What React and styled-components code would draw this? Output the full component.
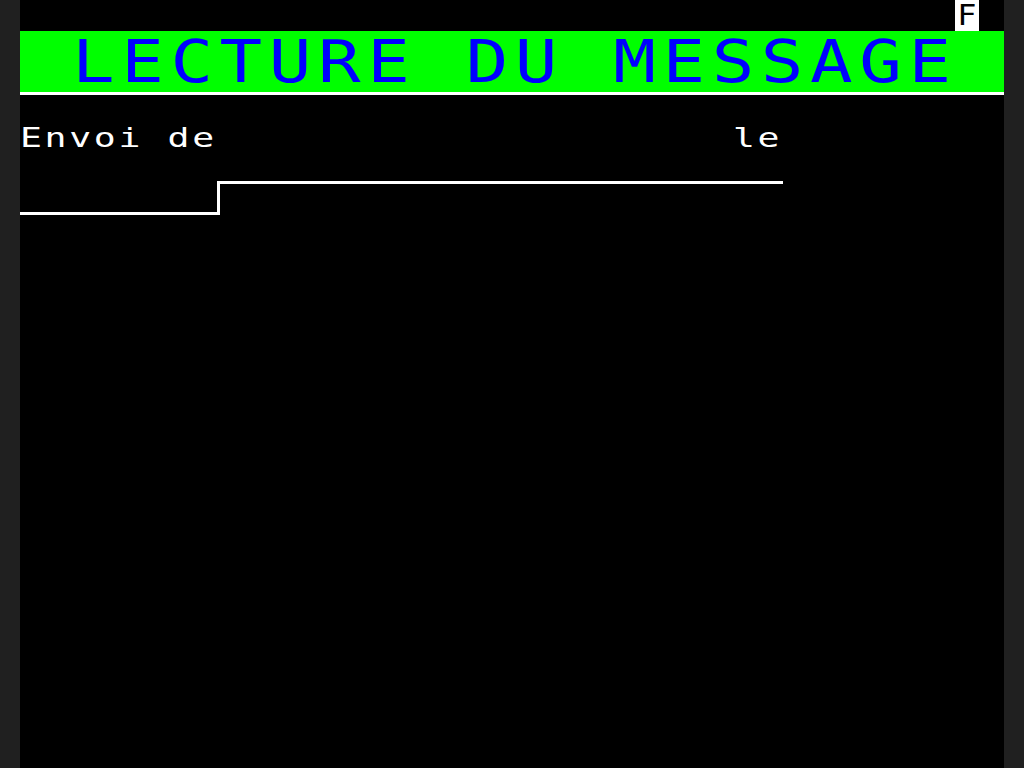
import React from "react";
import styled, { createGlobalStyle } from "styled-components";

const COL = 24.6;
const ROW = 30.72;

const Global = createGlobalStyle`
  html, body { margin: 0; padding: 0; background: #202020; }
  body { width: 1024px; height: 768px; overflow: hidden; }
`;

const Screen = styled.div`
  width: 984px;
  height: 768px;
  margin: 0 auto;
  background: #000;
  display: flex;
  flex-direction: column;
  font-family: "DejaVu Sans Mono", "Liberation Mono", monospace;
`;

const StatusRow = styled.div`
  height: 31px;
  display: flex;
  justify-content: flex-end;
  padding-right: ${COL}px;
`;

const Badge = styled.div`
  width: ${COL}px;
  height: 31px;
  background: #fff;
  color: #000;
  font-size: 29px;
  line-height: 31px;
  display: flex;
  justify-content: center;
`;

const BadgeText = styled.span`
  display: inline-block;
  transform: scaleX(1.1);
`;

const Banner = styled.div`
  height: ${ROW * 2}px;
  background: #00ff00;
  border-bottom: 3px solid #fff;
  display: flex;
  align-items: center;
  padding-left: ${COL * 2}px;
`;

const Title = styled.span`
  color: #0000ff;
  font-size: 59px;
  font-weight: 400;
  line-height: ${ROW * 2}px;
  letter-spacing: ${49.2 / 1.2 - 0.602 * 59}px;
  white-space: pre;
  display: inline-block;
  transform: scaleX(1.2);
  transform-origin: left center;
  margin-left: 3px;
`;

const FieldRow = styled.div`
  margin-top: 27.5px;
  height: ${ROW}px;
  display: grid;
  grid-template-columns: repeat(40, ${COL}px);
`;

const Label = styled.span`
  grid-column: ${(p) => p.$col + 1} / span ${(p) => p.$span};
  color: #fff;
  font-size: 27px;
  line-height: ${ROW}px;
  letter-spacing: ${COL / 1.35 - 0.602 * 27}px;
  white-space: pre;
  display: inline-block;
  transform: scaleX(1.35);
  transform-origin: left center;
`;

const Step = styled.div`
  margin-top: 27.4px;
  display: flex;
  align-items: flex-start;
`;

const StepLow = styled.div`
  width: 197px;
  height: 31px;
  border-bottom: 3px solid #fff;
  border-right: 3px solid #fff;
`;

const StepHigh = styled.div`
  width: 563px;
  border-top: 3px solid #fff;
`;

export default function App() {
  return (
    <>
      <Global />
      <Screen>
        <StatusRow>
          <Badge>
            <BadgeText>F</BadgeText>
          </Badge>
        </StatusRow>
        <Banner>
          <Title>LECTURE DU MESSAGE</Title>
        </Banner>
        <FieldRow>
          <Label $col={0} $span={8}>Envoi de</Label>
          <Label $col={29} $span={2}>le</Label>
        </FieldRow>
        <Step>
          <StepLow />
          <StepHigh />
        </Step>
      </Screen>
    </>
  );
}
